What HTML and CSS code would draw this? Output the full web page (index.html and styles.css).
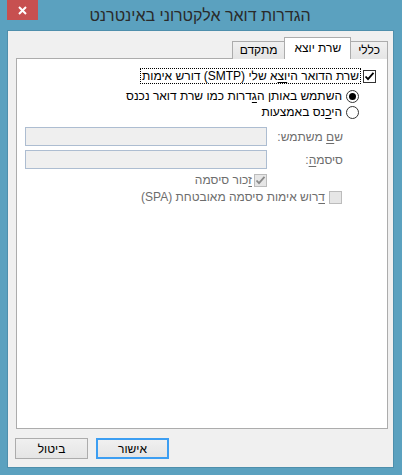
FILE: index.html
```html
<!DOCTYPE html>
<html lang="he" dir="rtl">
<head>
    <meta charset="UTF-8">
    <title>הגדרות דואר אלקטרוני באינטרנט</title>
    <link rel="stylesheet" href="styles.css">
</head>
<body>
    <div class="window">
        <!-- כותרת החלון -->
        <div class="titlebar">
            <span class="spacer"></span>
            <span class="title">הגדרות דואר אלקטרוני באינטרנט</span>
            <span class="close">
                <svg width="9" height="9" viewBox="0 0 9 9"><path d="M1 1 L8 8 M8 1 L1 8" stroke="#fff" stroke-width="2"/></svg>
            </span>
        </div>

        <div class="client">
            <!-- לשוניות -->
            <div class="tabs">
                <div class="tab">כללי</div>
                <div class="tab active">שרת יוצא</div>
                <div class="tab">מתקדם</div>
            </div>

            <div class="panel">
                <div class="row">
                    <span class="box"><svg width="11" height="11" viewBox="0 0 11 11"><path d="M1.5 5.5 L4 8.2 L9.5 1.8" fill="none" stroke="#000" stroke-width="1.8"/></svg></span>
                    <span class="focus">שרת הדואר הי<u>וצ</u>א שלי (SMTP) דורש אימות</span>
                </div>
                <div class="row sub">
                    <span class="radio on"></span>
                    <span>השתמש באותן ה<u>ג</u>דרות כמו שרת דואר נכנס</span>
                </div>
                <div class="row sub">
                    <span class="radio"></span>
                    <span>הי<u>כ</u>נס באמצעות</span>
                </div>

                <div class="login">
                    <label class="muted">ש<u>ם</u> משתמש:</label>
                    <span class="field"></span>
                    <label class="muted">סיסמ<u>ה</u>:</label>
                    <span class="field"></span>
                    <span></span>
                    <div class="row muted">
                        <span class="box off"><svg width="11" height="11" viewBox="0 0 11 11"><path d="M1.5 5.5 L4 8.2 L9.5 1.8" fill="none" stroke="#8a8a8a" stroke-width="1.8"/></svg></span>
                        <span><u>ז</u>כור סיסמה</span>
                    </div>
                </div>
                <div class="row muted spa">
                    <span class="box off"></span>
                    <span><u>ד</u>רוש אימות סיסמה מאובטחת (SPA)</span>
                </div>
            </div>

            <div class="footer">
                <span class="btn default">אישור</span>
                <span class="btn">ביטול</span>
            </div>
        </div>
    </div>
</body>
</html>
```

FILE: styles.css
```css
* {
    box-sizing: border-box;
}

body {
    margin: 0;
    font-family: "Liberation Sans", "DejaVu Sans", sans-serif;
    font-size: 12px;
    color: #000;
}

u {
    text-decoration: underline;
    text-underline-offset: 2px;
}

.window {
    width: 402px;
    height: 475px;
    background: #5ba1bf;
    padding: 0 9px 8px 8px;
    display: flex;
    flex-direction: column;
}

/* כותרת */
.titlebar {
    height: 31px;
    display: grid;
    grid-template-columns: 31px 1fr 31px;
    margin-left: -1px;
}

.title {
    text-align: center;
    font-size: 16px;
    color: #2a2a2a;
    line-height: 16px;
    padding-top: 8px;
}

.close {
    height: 20px;
    background: #c75050;
    display: flex;
    align-items: center;
    justify-content: center;
}

.client {
    flex: 1;
    background: #f0f0f0;
    box-shadow: 0 0 0 1px #4e8fac;
    padding: 6px 5px 8px 7px;
    display: flex;
    flex-direction: column;
}

/* לשוניות */
.tabs {
    display: flex;
    align-items: flex-end;
    height: 21px;
    margin-left: 1px;
    position: relative;
    z-index: 1;
}

.tab {
    height: 18px;
    padding: 0 7px;
    line-height: 16px;
    border: 1px solid #acacac;
    border-bottom: none;
    background: linear-gradient(#f0f0f0, #e5e5e5);
    margin-bottom: -1px;
}

.tab + .tab {
    border-left: 1px solid #acacac;
}

.tab.active {
    height: 22px;
    background: #fff;
    padding: 2px 9px 0;
    margin: 0 -1px -1px;
}

.panel {
    flex: 1;
    margin-left: 1px;
    background: #fff;
    border: 1px solid #acacac;
    padding: 8px 11px 0 0;
}

.row {
    display: flex;
    align-items: center;
    gap: 2px;
    height: 18px;
}

.row.sub {
    margin-top: 2px;
    padding-right: 17px;
    gap: 4px;
}

.row.sub + .row.sub {
    margin-top: -2px;
}

.box {
    width: 13px;
    height: 13px;
    border: 1px solid #333;
    background: #fff;
    display: flex;
    align-items: center;
    justify-content: center;
    flex: none;
}

.box.off {
    border-color: #bcbcbc;
    background: #e6e6e6;
}

.focus {
    border: 1px dotted #000;
    padding: 0 1px;
    line-height: 14px;
}

.radio {
    width: 13px;
    height: 13px;
    border: 1px solid #333;
    border-radius: 50%;
    background: #fff;
    display: flex;
    align-items: center;
    justify-content: center;
    flex: none;
}

.radio.on::after {
    content: "";
    width: 7px;
    height: 7px;
    border-radius: 50%;
    background: #000;
}

.muted {
    color: #6d6d6d;
}

/* פרטי כניסה */
.login {
    display: grid;
    grid-template-columns: 1fr 242px;
    row-gap: 4px;
    margin: 6px 33px 0 8px;
    align-items: center;
}

.field {
    height: 19px;
    border: 1px solid #adbdd1;
    background: #efefef;
}

.login .row {
    height: 14px;
}

.row.spa {
    margin: 1px 34px 0 0;
    gap: 4px;
}

/* כפתורים */
.footer {
    display: flex;
    justify-content: flex-end;
    gap: 8px;
    margin-top: 9px;
    height: 21px;
}

.btn {
    width: 73px;
    height: 21px;
    border: 1px solid #acacac;
    background: linear-gradient(#f0f0f0, #e5e5e5);
    display: flex;
    align-items: center;
    justify-content: center;
}

.btn.default {
    border: 2px solid #3c9ef2;
}
```
